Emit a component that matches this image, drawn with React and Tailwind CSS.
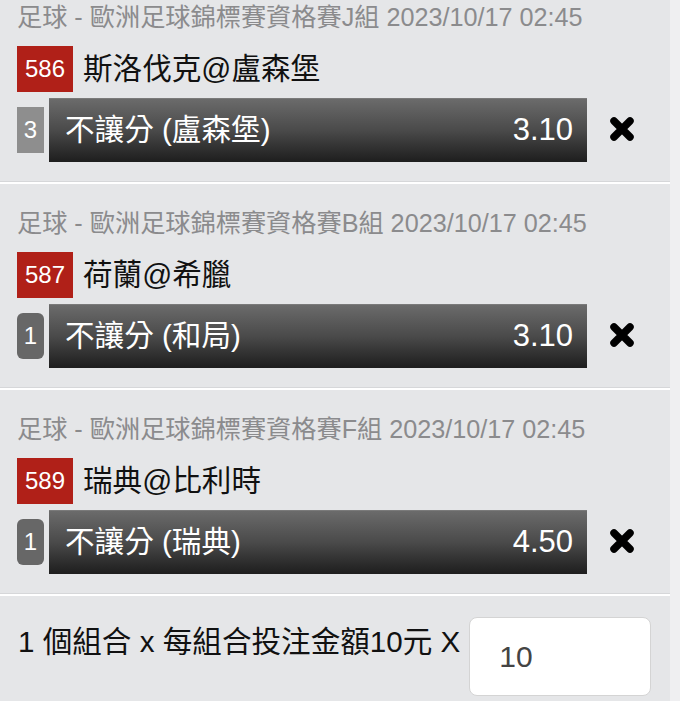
const FONT = { fontFamily: '"Liberation Sans", "Noto Sans CJK TC", sans-serif' };

const bets = [
  {
    league: '足球 - 歐洲足球錦標賽資格賽J組 2023/10/17 02:45',
    no: '586',
    match: '斯洛伐克@盧森堡',
    count: '3',
    square: true,
    pick: '不讓分 (盧森堡)',
    odds: '3.10',
  },
  {
    league: '足球 - 歐洲足球錦標賽資格賽B組 2023/10/17 02:45',
    no: '587',
    match: '荷蘭@希臘',
    count: '1',
    pick: '不讓分 (和局)',
    odds: '3.10',
  },
  {
    league: '足球 - 歐洲足球錦標賽資格賽F組 2023/10/17 02:45',
    no: '589',
    match: '瑞典@比利時',
    count: '1',
    pick: '不讓分 (瑞典)',
    odds: '4.50',
  },
];

function CloseIcon() {
  return (
    <svg width="32" height="32" viewBox="0 0 32 32">
      <path d="M8 8 L24 24 M24 8 L8 24" stroke="#000" strokeWidth="7.5" strokeLinecap="round" />
    </svg>
  );
}

function BetRow({ bet, first }) {
  return (
    <section className={`px-[17px] pt-[24px] pb-[19px] ${first ? '-mt-[22px]' : ''}`}>
      <div className="h-[32px] flex items-center text-[25.2px] text-[#8b8b8d] whitespace-nowrap">{bet.league}</div>
      <div className="mt-[12px] flex items-center gap-[10px]">
        <span className="w-[56px] h-[46px] bg-[#b02018] text-white text-[24px] flex items-center justify-center">
          {bet.no}
        </span>
        <span className="text-[29.6px] text-[#111]">{bet.match}</span>
      </div>
      <div className="mt-[6px] flex items-center">
        <span
          className={`w-[27px] h-[46px] flex items-center justify-center text-white text-[24px] ${
            bet.square ? 'bg-[#8e8e8e]' : 'bg-[#676767] rounded-md'
          }`}
        >
          {bet.count}
        </span>
        <div className="ml-[5px] w-[538px] h-[64px] border-t border-[#7a7a7a] bg-linear-to-b from-[#6b6b6b] via-[#4a4a4a] to-[#1e1e1e] flex items-center justify-between pl-[16px] pr-[14px] text-white">
          <span className="text-[29.6px]">{bet.pick}</span>
          <span className="text-[31px]">{bet.odds}</span>
        </div>
        <div className="ml-[19px] -mt-[3px]">
          <CloseIcon />
        </div>
      </div>
    </section>
  );
}

export default function App() {
  return (
    <div className="w-[680px] h-[701px] overflow-hidden bg-[#efeff1] flex" style={FONT}>
      <main className="w-[670px] bg-[#e5e6e8]">
        {bets.map((bet, i) => (
          <div key={bet.no}>
            <BetRow bet={bet} first={i === 0} />
            <div className="h-[1px] bg-[#d6d7d9]" />
            <div className="h-[2px] bg-white" />
          </div>
        ))}
        <div className="flex items-start pl-[18px] pt-[21px]">
          <span className="text-[29.6px] text-[#111] mt-[3px] whitespace-nowrap">1 個組合 x 每組合投注金額10元 X</span>
          <div className="ml-[9px] w-[182px] h-[79px] bg-white rounded-lg border border-[#d4d4d4] flex items-center pl-[29px] text-[30px] text-[#444]">
            10
          </div>
        </div>
      </main>
    </div>
  );
}
